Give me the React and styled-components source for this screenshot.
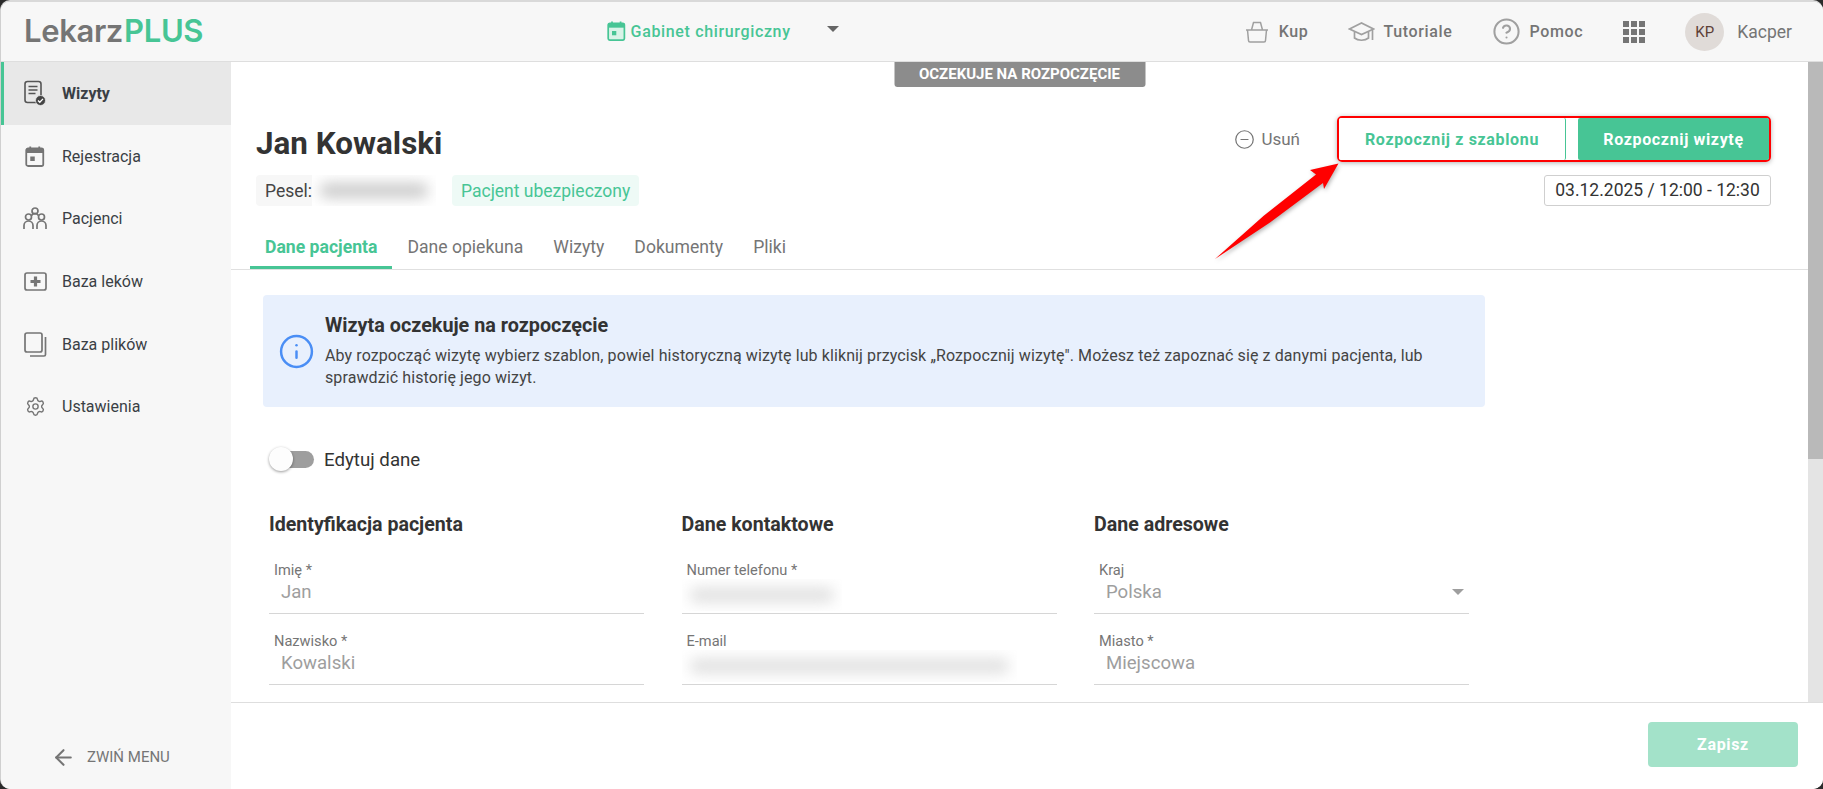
import React from "react";
import styled, { createGlobalStyle } from "styled-components";
import { ArrowLeft, CircleHelp, CircleMinus, Info, Settings } from "lucide-react";

const green = "#47c595";
const gray = "#757575";

const GlobalStyle = createGlobalStyle`
  html, body {
    margin: 0;
    height: 100%;
    overflow: hidden;
    background: #2b2b2b;
  }
  * {
    box-sizing: border-box;
  }
  body {
    font-family: Roboto, "Liberation Sans", sans-serif;
    color: #333;
  }
`;

const Window = styled.div`
  position: relative;
  width: 1823px;
  height: 789px;
  display: flex;
  flex-direction: column;
  background: #fff;
  border-top: 2px solid #d9d9d9;
  border-left: 1px solid #d0d0d0;
  border-radius: 10px;
  overflow: hidden;
`;

const TopBar = styled.header`
  height: 60px;
  flex: none;
  display: flex;
  align-items: center;
  background: #f7f7f7;
  border-bottom: 1px solid #dedede;
  padding-right: 31px;
`;

const Logo = styled.div`
  width: 606px;
  padding-left: 23px;
  font-family: Inter, sans-serif;
  font-size: 31px;
  font-weight: 600;
  letter-spacing: -0.35px;
  color: ${gray};
  margin-top: -2px;

  span {
    color: ${green};
    margin-left: 1px;
  }
`;

const Clinic = styled.div`
  display: flex;
  align-items: center;
  gap: 5px;
  color: ${green};
  font-size: 16px;
  font-weight: 500;
  letter-spacing: 0.65px;
  margin-top: -1px;
`;

const Caret = styled.span`
  width: 0;
  height: 0;
  border-left: 6px solid transparent;
  border-right: 6px solid transparent;
  border-top: 6px solid ${({ $color }) => $color || "#666"};
`;

const ClinicCaret = styled(Caret)`
  margin-left: 31px;
  margin-top: -5px;
`;

const TopNav = styled.nav`
  margin-left: auto;
  display: flex;
  align-items: center;
  gap: 40px;
`;

const NavItem = styled.a`
  display: flex;
  align-items: center;
  gap: ${({ $gap }) => $gap || 10}px;
  color: ${gray};
  font-size: 16px;
  font-weight: 500;
  letter-spacing: 0.65px;
`;

const Dots = styled.div`
  display: grid;
  grid-template-columns: repeat(3, 6px);
  grid-auto-rows: 6px;
  gap: 2px;

  i {
    background: ${gray};
  }
`;

const User = styled.div`
  display: flex;
  align-items: center;
  gap: 13px;
  color: ${gray};
  font-size: 17.5px;
`;

const Avatar = styled.div`
  width: 39px;
  height: 38px;
  border-radius: 50%;
  background: #e0dbd8;
  color: #5d4037;
  font-size: 15px;
  display: flex;
  align-items: center;
  justify-content: center;
`;

const Body = styled.div`
  flex: 1;
  min-height: 0;
  display: flex;
`;

const Sidebar = styled.aside`
  width: 230px;
  flex: none;
  display: flex;
  flex-direction: column;
  background: #f7f7f7;
`;

const MenuItem = styled.a`
  height: 62.7px;
  flex: none;
  display: flex;
  align-items: center;
  padding-left: ${({ $active }) => ($active ? 18 : 21)}px;
  border-left: ${({ $active }) => ($active ? `3px solid ${green}` : "none")};
  background: ${({ $active }) => ($active ? "#e8e8e8" : "transparent")};
  color: #3a3f45;
  font-size: 16px;
  font-weight: ${({ $active }) => ($active ? 700 : 400)};
`;

const MenuIcon = styled.span`
  width: 26px;
  height: 26px;
  margin-right: 14px;
  display: flex;
  align-items: center;
  justify-content: center;
  flex: none;
`;

const Collapse = styled.a`
  margin-top: auto;
  height: 64px;
  padding-left: 50px;
  display: flex;
  align-items: center;
  gap: 11px;
  color: ${gray};
  font-size: 15px;
`;

const Main = styled.main`
  flex: 1;
  min-width: 0;
  display: flex;
  flex-direction: column;
`;

const ScrollArea = styled.div`
  flex: 1;
  min-height: 0;
  display: flex;
`;

const Content = styled.div`
  position: relative;
  flex: 1;
  min-width: 0;
  overflow: hidden;
`;

const ScrollTrack = styled.div`
  width: 15px;
  flex: none;
  background: #e4e4e4;
`;

const ScrollThumb = styled.div`
  height: 62%;
  background: #b9b9b9;
`;

const StatusBadge = styled.div`
  position: absolute;
  top: 0;
  left: 50%;
  transform: translateX(-50%);
  width: 251px;
  height: 25px;
  background: #8c8c8c;
  border-radius: 0 0 3px 3px;
  color: #fff;
  font-size: 15px;
  font-weight: 700;
  line-height: 25px;
  text-align: center;
  text-transform: uppercase;
`;

const PatientHead = styled.section`
  display: flex;
  justify-content: space-between;
  align-items: flex-start;
  padding: 54px 37px 0 25px;
`;

const Name = styled.h1`
  margin: 8px 0 11px;
  font-size: 31.4px;
  line-height: 40px;
  font-weight: 700;
  color: #333;
`;

const Chips = styled.div`
  display: flex;
  gap: 16px;
`;

const Chip = styled.div`
  height: 31px;
  display: flex;
  align-items: center;
  padding: 0 ${({ $pad }) => $pad ?? 9}px 0 9px;
  border-radius: 4px;
  font-size: 17.5px;
  background: ${({ $ok }) => ($ok ? "#eefaf6" : "#f7f7f7")};
  color: ${({ $ok }) => ($ok ? green : "#444")};
`;

const Redacted = styled.span`
  display: block;
  overflow: hidden;
  width: ${({ $w }) => $w}px;
  height: ${({ $h }) => $h}px;
  background: #fff;

  &::before {
    content: "";
    display: block;
    margin: 8px;
    height: calc(100% - 16px);
    background: ${({ $tone }) => $tone || "#cbcbcb"};
    border-radius: 6px;
    filter: blur(7px);
  }
`;

const Actions = styled.div`
  display: flex;
  flex-direction: column;
  align-items: flex-end;
  gap: 13px;
`;

const ActionRow = styled.div`
  display: flex;
  align-items: center;
  gap: 37px;
`;

const Remove = styled.a`
  display: flex;
  align-items: center;
  gap: 6px;
  font-size: 17px;
  color: ${gray};
`;

const ButtonGroup = styled.div`
  width: 434px;
  height: 46px;
  display: flex;
  border: 2px solid #f00;
  border-radius: 5px;
  box-shadow: 0 1px 5px rgba(0, 0, 0, 0.3);
`;

const StartButton = styled.button`
  border: none;
  padding: 0;
  font-family: inherit;
  font-size: 16px;
  font-weight: 700;
  letter-spacing: 0.65px;
  border-radius: 2px;
  width: ${({ $w }) => $w}px;
  background: ${({ $primary }) => ($primary ? green : "#fff")};
  color: ${({ $primary }) => ($primary ? "#fff" : green)};
  border-right: ${({ $primary }) => ($primary ? "none" : `1px solid ${green}`)};
  margin-left: ${({ $primary }) => ($primary ? "auto" : 0)};
`;

const DateBox = styled.div`
  width: 227px;
  height: 31px;
  border: 1px solid #cfcfcf;
  border-radius: 3px;
  font-size: 17.5px;
  line-height: 29px;
  text-align: center;
  color: #333;
`;

const Tabs = styled.nav`
  display: flex;
  margin-top: 20px;
  padding-left: 19px;
  height: 44px;
  border-bottom: 1px solid #e0e0e0;
`;

const Tab = styled.a`
  height: 43px;
  padding: 2px 15px 0;
  font-size: 17.6px;
  font-weight: ${({ $active }) => ($active ? 700 : 400)};
  line-height: 38px;
  color: ${({ $active }) => ($active ? green : gray)};
  border-bottom: 3px solid ${({ $active }) => ($active ? green : "transparent")};
`;

const Notice = styled.div`
  margin: 25px 0 0 32px;
  width: 1222px;
  height: 112px;
  display: flex;
  align-items: center;
  gap: 10px;
  padding-left: 15px;
  background: #e8f0fd;
  border-radius: 4px;
`;

const NoticeTitle = styled.h3`
  margin: 0 0 7px;
  font-size: 19.8px;
  line-height: 24px;
  font-weight: 700;
  color: #333;
`;

const NoticeText = styled.p`
  margin: 0;
  font-size: 16px;
  line-height: 22px;
  letter-spacing: 0.1px;
  color: #444;
  width: 1130px;
`;

const EditRow = styled.div`
  margin: 40px 0 0 38px;
  display: flex;
  align-items: center;
  gap: 10px;
  font-size: 18.7px;
  color: #333;
`;

const Toggle = styled.span`
  position: relative;
  width: 45px;
  height: 25px;
  display: block;

  &::before {
    content: "";
    position: absolute;
    left: 1px;
    right: 0;
    top: 4px;
    height: 17px;
    border-radius: 9px;
    background: #9e9e9e;
  }
  &::after {
    content: "";
    position: absolute;
    left: 0;
    top: 0;
    width: 24px;
    height: 24px;
    border-radius: 50%;
    background: #fdfdfd;
    box-shadow: 0 1px 3px rgba(0, 0, 0, 0.4);
  }
`;

const FormGrid = styled.div`
  margin: 41px 0 0 38px;
  display: grid;
  grid-template-columns: repeat(3, 375px);
  column-gap: 37.5px;
`;

const SectionTitle = styled.h4`
  margin: 0 0 25px;
  font-size: 19.6px;
  line-height: 24px;
  font-weight: 700;
  color: #333;
`;

const Field = styled.div`
  position: relative;
  height: 52px;
  margin-bottom: 19px;
  padding-left: 5px;
  border-bottom: 1px solid #d6d6d6;
`;

const FieldLabel = styled.label`
  display: block;
  font-size: 14.6px;
  line-height: 16px;
  color: ${gray};
`;

const FieldValue = styled.div`
  display: flex;
  justify-content: space-between;
  align-items: center;
  margin-top: 2px;
  padding: 0 5px 0 7px;
  font-size: 18.6px;
  line-height: 24px;
  color: #9e9e9e;
`;

const FieldRedacted = styled(Redacted)`
  position: absolute;
  left: 0;
  top: 17px;
`;

const Footer = styled.footer`
  height: 87px;
  flex: none;
  display: flex;
  justify-content: flex-end;
  padding: 19px 25px 0 0;
  border-top: 1px solid #dedede;
  background: #fff;
`;

const SaveButton = styled.button`
  width: 150px;
  height: 45px;
  border: none;
  border-radius: 4px;
  background: #a3e2c9;
  color: #fff;
  font-family: inherit;
  font-size: 16px;
  font-weight: 700;
  letter-spacing: 0.65px;
`;

const Annotation = styled.svg`
  position: absolute;
  left: 1190px;
  top: 140px;
  filter: drop-shadow(1px 2px 2px rgba(0, 0, 0, 0.3));
  pointer-events: none;
`;

const VisitsIcon = () => (
  <svg width="24" height="26" viewBox="0 0 24 26" fill="none">
    <rect x="2" y="1.5" width="16" height="21" rx="2.5" stroke="#555" strokeWidth="1.6" />
    <path d="M5.5 6.5h9M5.5 10h9M5.5 13.5h7" stroke="#555" strokeWidth="1.5" />
    <circle cx="17.5" cy="20.5" r="5" fill="#444" stroke="#e8e8e8" strokeWidth="0.8" />
    <path d="M15 20.5l1.8 1.8 3.2-3.4" stroke="#fff" strokeWidth="1.3" />
  </svg>
);

const CalendarIcon = ({ color = "#757575", filled = false, size = 21 }) => (
  <svg width={size * 0.93} height={size} viewBox="0 0 19 21" fill="none">
    <path d="M5 0.5v4M14 0.5v4" stroke={color} strokeWidth="1.8" />
    <rect x="1" y="2.5" width="17" height="17.5" rx="1.8" fill={filled ? "#d9f3e8" : "none"} stroke={color} strokeWidth="1.8" />
    <rect x="1" y="2.5" width="17" height="4.5" fill={color} />
    <rect x="5" y="10.5" width="4.5" height="4.5" fill={color} />
  </svg>
);

const PeopleIcon = () => (
  <svg width="26" height="23" viewBox="0 0 26 23" fill="none" stroke="#757575" strokeWidth="1.7">
    <circle cx="13" cy="4" r="3" />
    <circle cx="6.5" cy="10" r="3" />
    <circle cx="19.5" cy="10" r="3" />
    <path d="M2 22v-3.500a4.500 4.500 0 0 1 9 0V22M15 22v-3.500a4.500 4.500 0 0 1 9 0V22M9.500 8.500A4 4 0 0 1 16.500 8.500" />
  </svg>
);

const MedsIcon = () => (
  <svg width="23" height="19" viewBox="0 0 23 19" fill="none">
    <rect x="1" y="1" width="21" height="17" rx="2" stroke="#757575" strokeWidth="1.7" />
    <path d="M11.500 4.500v10M6.500 9.500h10" stroke="#757575" strokeWidth="3.200" />
  </svg>
);

const FilesIcon = () => (
  <svg width="23" height="25" viewBox="0 0 23 25" fill="none" stroke="#757575" strokeWidth="1.700">
    <rect x="1" y="1" width="17" height="19" rx="2" />
    <path d="M21.500 5v17.500a1.500 1.500 0 0 1-1.500 1.500H6" />
  </svg>
);

const BasketIcon = () => (
  <svg width="24" height="22" viewBox="0 0 24 22" fill="none" stroke="#a0a0a0" strokeWidth="1.500">
    <path d="M1 9h22M2.500 9l1 10.500a1.500 1.500 0 0 0 1.500 1.500h14a1.500 1.500 0 0 0 1.500-1.500l1-10.500M6.500 9L8.500 1.500h7L17.500 9" />
  </svg>
);

const CapIcon = () => (
  <svg width="27" height="21" viewBox="0 0 27 21" fill="none" stroke="#a0a0a0" strokeWidth="1.700">
    <path d="M1.500 8L13.500 2l12 6-12 5.500z" />
    <path d="M6.500 11v6c3.500 3 10.500 3 14 0v-6M24.500 9v10" />
  </svg>
);

const GridIcon = () => (
  <Dots>
    {Array.from({ length: 9 }, (_, i) => (
      <i key={i} />
    ))}
  </Dots>
);

const menu = [
  { label: "Wizyty", icon: <VisitsIcon />, active: true },
  { label: "Rejestracja", icon: <CalendarIcon /> },
  { label: "Pacjenci", icon: <PeopleIcon /> },
  { label: "Baza leków", icon: <MedsIcon /> },
  { label: "Baza plików", icon: <FilesIcon /> },
  { label: "Ustawienia", icon: <Settings size={21} color="#757575" strokeWidth={1.6} /> },
];

const tabs = ["Dane pacjenta", "Dane opiekuna", "Wizyty", "Dokumenty", "Pliki"];

const App = () => (
  <>
    <GlobalStyle />
    <Window>
      <TopBar>
        <Logo>
          Lekarz<span>PLUS</span>
        </Logo>
        <Clinic>
          <CalendarIcon color={green} filled size={20} />
          Gabinet chirurgiczny
          <ClinicCaret />
        </Clinic>
        <TopNav>
          <NavItem>
            <BasketIcon />
            Kup
          </NavItem>
          <NavItem $gap={8}>
            <CapIcon />
            Tutoriale
          </NavItem>
          <NavItem $gap={8}>
            <CircleHelp size={29} color="#a0a0a0" strokeWidth={1.7} />
            Pomoc
          </NavItem>
          <GridIcon />
          <User>
            <Avatar>KP</Avatar>
            Kacper
          </User>
        </TopNav>
      </TopBar>
      <Body>
        <Sidebar>
          {menu.map((item) => (
            <MenuItem key={item.label} $active={item.active}>
              <MenuIcon>{item.icon}</MenuIcon>
              {item.label}
            </MenuItem>
          ))}
          <Collapse>
            <ArrowLeft size={25} color={gray} strokeWidth={2} />
            ZWIŃ MENU
          </Collapse>
        </Sidebar>
        <Main>
          <ScrollArea>
            <Content>
              <StatusBadge>Oczekuje na rozpoczęcie</StatusBadge>
              <PatientHead>
                <div>
                  <Name>Jan Kowalski</Name>
                  <Chips>
                    <Chip $pad={0}>
                      Pesel:
                      <Redacted $w={124} $h={31} />
                    </Chip>
                    <Chip $ok>Pacjent ubezpieczony</Chip>
                  </Chips>
                </div>
                <Actions>
                  <ActionRow>
                    <Remove>
                      <CircleMinus size={21} color={gray} strokeWidth={1.4} />
                      Usuń
                    </Remove>
                    <ButtonGroup>
                      <StartButton $w={227}>Rozpocznij z szablonu</StartButton>
                      <StartButton $primary $w={191}>Rozpocznij wizytę</StartButton>
                    </ButtonGroup>
                  </ActionRow>
                  <DateBox>03.12.2025 / 12:00 - 12:30</DateBox>
                </Actions>
              </PatientHead>
              <Tabs>
                {tabs.map((tab, i) => (
                  <Tab key={tab} $active={i === 0}>
                    {tab}
                  </Tab>
                ))}
              </Tabs>
              <Notice>
                <Info size={37} color="#4a8ef5" strokeWidth={1.6} />
                <div>
                  <NoticeTitle>Wizyta oczekuje na rozpoczęcie</NoticeTitle>
                  <NoticeText>
                    Aby rozpocząć wizytę wybierz szablon, powiel historyczną wizytę lub kliknij przycisk „Rozpocznij wizytę". Możesz też zapoznać się z danymi pacjenta, lub sprawdzić historię jego wizyt.
                  </NoticeText>
                </div>
              </Notice>
              <EditRow>
                <Toggle />
                Edytuj dane
              </EditRow>
              <FormGrid>
                <div>
                  <SectionTitle>Identyfikacja pacjenta</SectionTitle>
                  <Field>
                    <FieldLabel>Imię *</FieldLabel>
                    <FieldValue>Jan</FieldValue>
                  </Field>
                  <Field>
                    <FieldLabel>Nazwisko *</FieldLabel>
                    <FieldValue>Kowalski</FieldValue>
                  </Field>
                </div>
                <div>
                  <SectionTitle>Dane kontaktowe</SectionTitle>
                  <Field>
                    <FieldLabel>Numer telefonu *</FieldLabel>
                    <FieldRedacted $w={160} $h={32} $tone="#e2e2e2" />
                  </Field>
                  <Field>
                    <FieldLabel>E-mail</FieldLabel>
                    <FieldRedacted $w={335} $h={32} $tone="#e2e2e2" />
                  </Field>
                </div>
                <div>
                  <SectionTitle>Dane adresowe</SectionTitle>
                  <Field>
                    <FieldLabel>Kraj</FieldLabel>
                    <FieldValue>
                      Polska
                      <Caret $color="#9e9e9e" />
                    </FieldValue>
                  </Field>
                  <Field>
                    <FieldLabel>Miasto *</FieldLabel>
                    <FieldValue>Miejscowa</FieldValue>
                  </Field>
                </div>
              </FormGrid>
            </Content>
            <ScrollTrack>
              <ScrollThumb />
            </ScrollTrack>
          </ScrollArea>
          <Footer>
            <SaveButton>Zapisz</SaveButton>
          </Footer>
        </Main>
      </Body>
      <Annotation width="160" height="125" viewBox="1190 140 160 125">
        <polygon points="1337.500,161.500 1309,168 1315,172.500 1263,213.500 1214,257 1269,220.500 1322,181 1323,187" fill="#f00" />
      </Annotation>
    </Window>
  </>
);

export default App;
